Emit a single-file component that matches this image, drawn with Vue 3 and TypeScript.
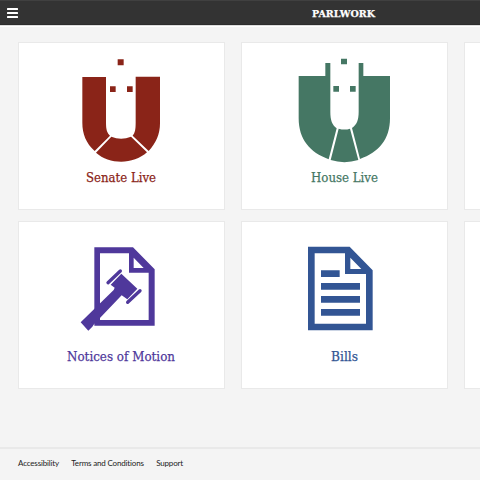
<script setup lang="ts">
interface Tile {
  label: string
  kind: 'senate' | 'house' | 'motion' | 'bills'
  width: number
  viewBox: string
}

const tiles: Tile[] = [
  { label: 'Senate Live', kind: 'senate', width: 70, viewBox: '-27 15 360 342' },
  { label: 'House Live', kind: 'house', width: 67, viewBox: '-18 15 360 342' },
  { label: 'Notices of Motion', kind: 'motion', width: 108, viewBox: '3 -3 360 342' },
  { label: 'Bills', kind: 'bills', width: 27, viewBox: '-18 -3 360 342' },
]
const columns: Tile[][] = [[tiles[0], tiles[2]], [tiles[1], tiles[3]], []]
const links: string[] = ['Accessibility', 'Terms and Conditions', 'Support']
</script>

<template>
  <div class="page">
    <header class="bar">
      <button class="menu" aria-label="Menu"><i></i><i></i><i></i></button>
      <svg class="brand" width="66" height="18" viewBox="0 0 66 18">
        <text x="1" y="12" textLength="63" lengthAdjust="spacingAndGlyphs">PARLWORK</text>
      </svg>
    </header>
    <main class="board">
      <div v-for="(column, c) in columns" :key="c" class="column">
        <article v-for="tile in column" :key="tile.label" class="card" :class="tile.kind">
          <svg class="icon" width="120" height="114" :viewBox="tile.viewBox" fill="currentColor">
            <g v-if="tile.kind === 'senate'">
              <path d="M143 28h18v18h-18zM120 109h17v17h-17zM171 109h17v17h-17z" />
              <path d="M37 81H108V218C108 238 111 248 120 257L74 303C48 279 37 252 37 218Z" />
              <path d="M124 260Q153 272 183 260L231 307C190 344 118 344 78 308Z" />
              <path d="M197 80H270V220C270 252 258 280 236 303L188 257C195 248 197 238 197 218Z" />
            </g>
            <g v-else-if="tile.kind === 'house'">
              <path d="M153 26h18v17h-18zM130 108h17v17h-17zM180 108h17v17h-17z" />
              <path d="M26 78H106V39H121V186C121 210 126 225 140 235L116 328C60 307 26 269 26 205Z" />
              <path d="M146 236Q164 241 180 236L205 330Q163 343 122 330Z" />
              <path d="M206 39H220V78H300V205C300 269 266 307 210 327L186 234C200 225 206 210 206 186Z" />
            </g>
            <g v-else-if="tile.kind === 'motion'">
              <path fill-rule="evenodd" d="M103 37H219L284 103V272H103ZM120 55V255H266V113H207V55ZM221 68V99H251Z" />
              <path d="M184 116L232 161L202 193L185 181L102 268L97 275L85 287L62 262L161 165L164 158L152 149Z" />
              <path d="M144 143L181 108M203 202L240 167" fill="none" stroke="currentColor" stroke-width="10" stroke-linecap="round" />
            </g>
            <g v-else>
              <path fill-rule="evenodd" d="M54 35H179L248 106V286H54ZM74 55V266H228V117H165V55ZM181 68V102H214Z" />
              <path d="M93 106h56v20H93zM93 144h117v20H93zM93 183h117v20H93zM93 222h117v20H93z" />
            </g>
          </svg>
          <svg class="label" :width="tile.width" height="20" :viewBox="`0 0 ${tile.width} 20`">
            <text x="0" y="13" :textLength="tile.width" lengthAdjust="spacingAndGlyphs">{{ tile.label }}</text>
          </svg>
        </article>
        <template v-if="!column.length">
          <article class="card"></article>
          <article class="card"></article>
        </template>
      </div>
    </main>
    <footer class="footer">
      <a v-for="link in links" :key="link">{{ link }}</a>
    </footer>
  </div>
</template>

<style>
body {
  margin: 0;
  overflow: hidden;
}
</style>

<style scoped>
.page {
  width: 480px;
  height: 480px;
  box-sizing: border-box;
  overflow: hidden;
  display: flex;
  flex-direction: column;
  background: #f4f4f4;
}
.bar {
  height: 25px;
  flex: none;
  box-sizing: border-box;
  background: #333;
  border-top: 1px solid #404040;
  border-bottom: 1px solid #2c2c2c;
  box-shadow: 0 1px 0 #ddd, 0 2px 0 #fff;
  display: flex;
  align-items: center;
  padding-left: 7px;
}
.menu {
  display: flex;
  flex-direction: column;
  gap: 2px;
  width: 11px;
  padding: 0;
  border: 0;
  background: none;
}
.menu i {
  height: 2px;
  border-radius: 0.5px;
  background: #fff;
}
.brand {
  margin: 3px 0 0 293px;
}
.brand text {
  font: bold 10px 'Roboto Slab', 'DejaVu Serif', serif;
  fill: #fff;
  stroke: #fff;
  stroke-width: 0.25px;
}
.board {
  display: flex;
  gap: 16px;
  padding: 17px 0 0 18px;
  height: 405px;
  flex: none;
  overflow: hidden;
}
.column {
  width: 207px;
  flex: none;
  display: flex;
  flex-direction: column;
  gap: 11px;
}
.card {
  height: 168px;
  box-sizing: border-box;
  background: #fff;
  border: 1px solid #e9e9e9;
  padding: 12px 1px 0 0;
  display: flex;
  flex-direction: column;
  align-items: center;
}
.icon,
.label {
  display: block;
  flex: none;
}
.label {
  overflow: visible;
}
.label text {
  font: 13px 'Roboto Slab', 'DejaVu Serif', serif;
  fill: currentColor;
  stroke: currentColor;
  stroke-width: 0.25px;
}
.senate {
  color: #8a2418;
}
.house {
  color: #457764;
}
.motion {
  color: #4f389b;
}
.bills {
  color: #325594;
}
.footer {
  flex: 1;
  border-top: 2px solid #e9e9e9;
  display: flex;
  gap: 12.4px;
  padding: 8px 0 0 18px;
  font: 8px/12px Lato, sans-serif;
  letter-spacing: -0.17px;
  color: #222;
}
</style>
